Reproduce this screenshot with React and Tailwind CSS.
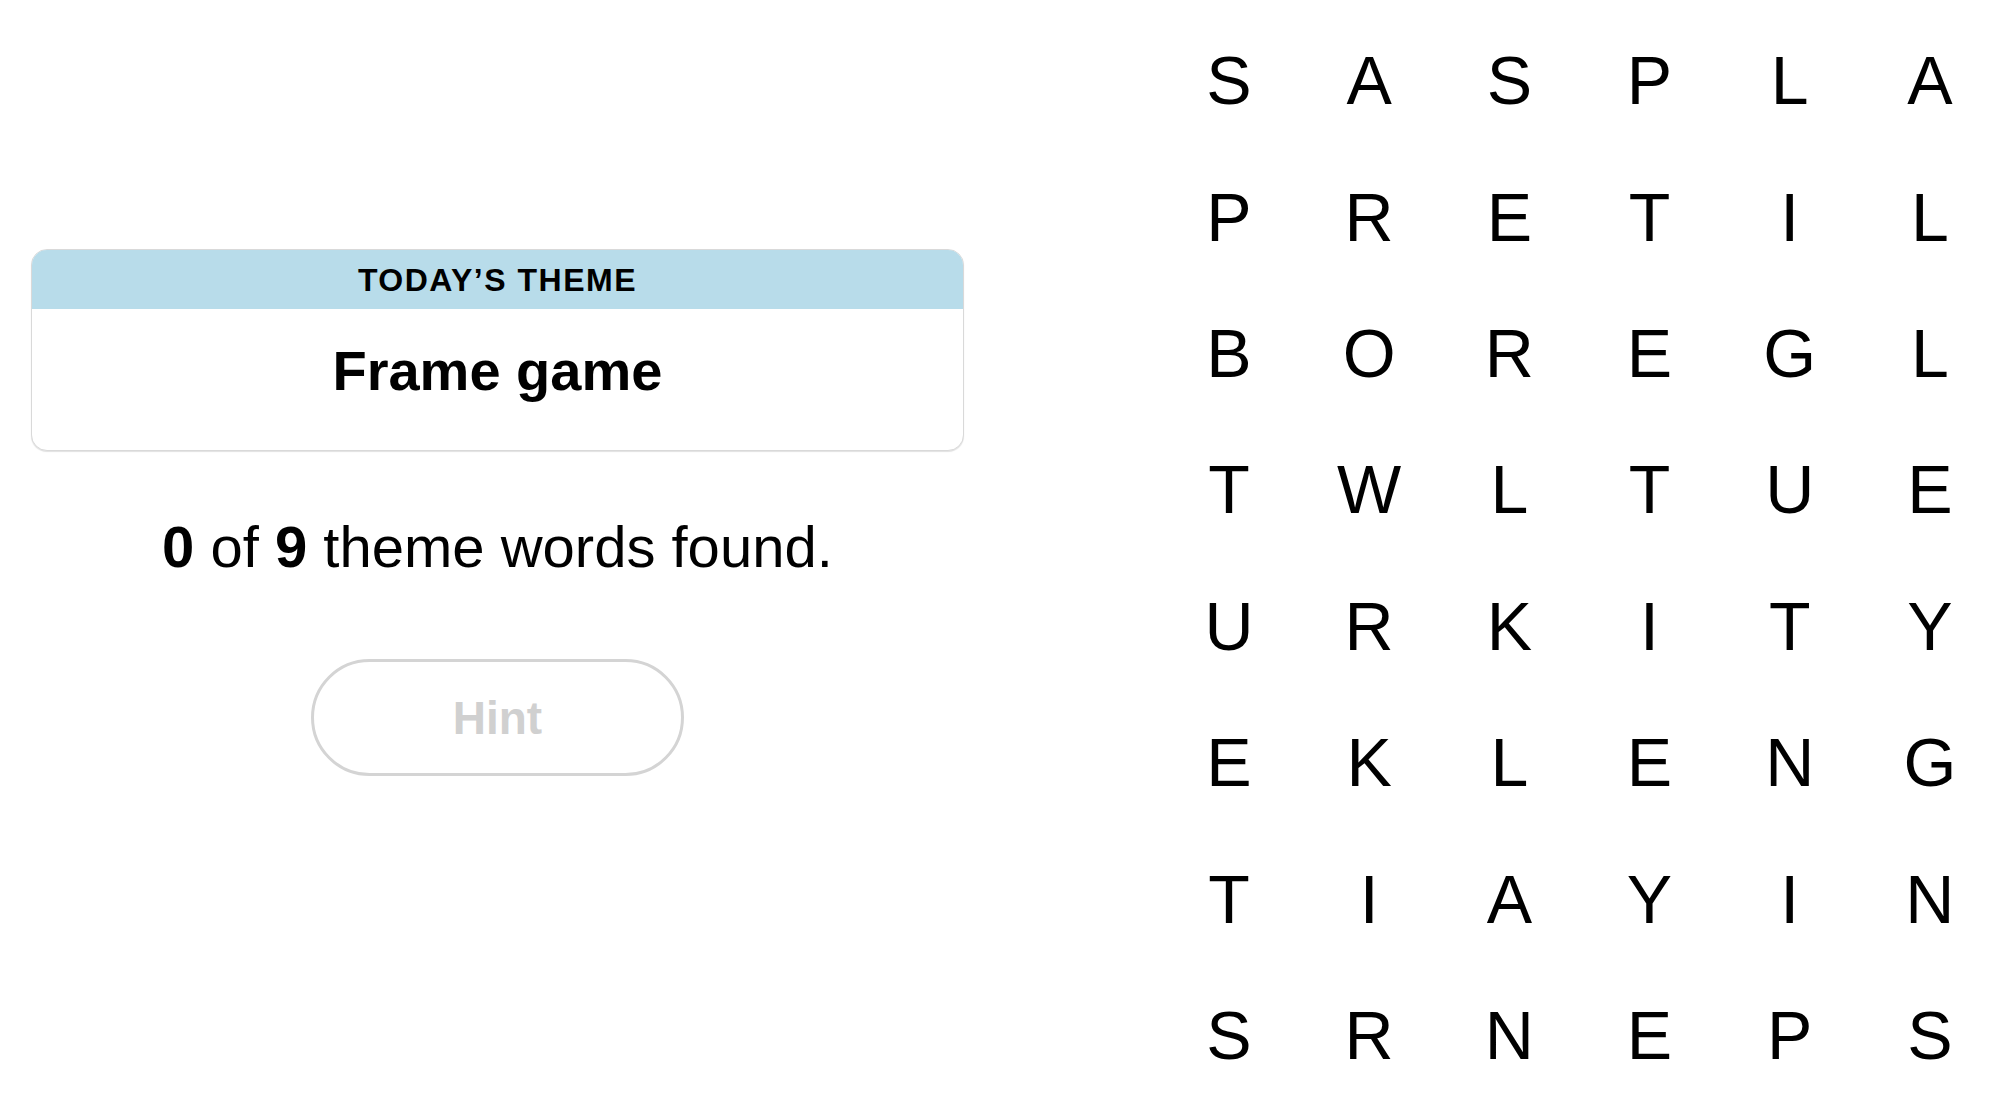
const letters = [
  'SASPLA',
  'PRETIL',
  'BOREGL',
  'TWLTUE',
  'URKITY',
  'EKLENG',
  'TIAYIN',
  'SRNEPS',
];

function ThemeCard() {
  return (
    <div className="w-full overflow-hidden rounded-[16px] border border-[#d9d9d9] bg-white shadow-[0_1px_1px_rgba(0,0,0,0.12)]">
      <div className="flex h-[59px] items-center justify-center bg-[#b8dcea]">
        <span className="text-[32px] font-bold leading-none tracking-[1.5px] text-black">TODAY’S THEME</span>
      </div>
      <div className="flex h-[141px] justify-center pt-[34px]">
        <span className="text-[56px] font-bold leading-none text-black">Frame game</span>
      </div>
    </div>
  );
}

export default function App() {
  return (
    <div className="flex h-[1118px] w-[2000px] overflow-hidden bg-white font-['Liberation_Sans',Arial,sans-serif] text-black">
      {/* Left panel */}
      <div className="ml-[31px] flex w-[934px] flex-col items-center pt-[249px]">
        <ThemeCard />
        <p className="mt-[67px] text-[58px] leading-none">
          <span className="font-bold">0</span> of <span className="font-bold">9</span> theme words found.
        </p>
        <button
          type="button"
          className="mt-[83px] flex h-[117px] w-[373px] items-center justify-center rounded-full border-[3px] border-[#d4d4d4] bg-white text-[46px] font-bold leading-none text-[#d0d0d0]"
        >
          Hint
        </button>
      </div>

      {/* Letter board */}
      <div className="ml-[195px] grid grid-cols-[repeat(6,140.2px)] grid-rows-[repeat(8,136.4px)] pt-[12px]">
        {letters.map((row, r) =>
          row.split('').map((ch, c) => (
            <div key={`${r}-${c}`} className="flex items-center justify-center text-[68px] leading-none">
              {ch}
            </div>
          ))
        )}
      </div>
    </div>
  );
}
